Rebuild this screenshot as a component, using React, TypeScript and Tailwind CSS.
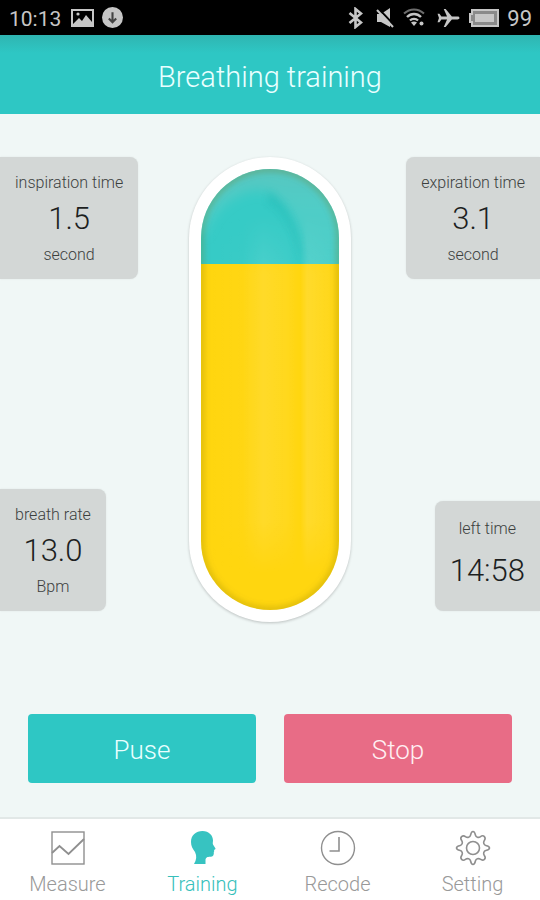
import type { ReactNode } from "react";

type Metric = { label: string; value: string; unit?: string };

function StatCard({ metric, side }: { metric: Metric; side: "left" | "right" }) {
  const edge = side === "left" ? "self-start rounded-r-lg" : "self-end rounded-l-lg";
  const size = metric.unit ? "h-[122px] pt-4" : "h-[110px] pt-[18px]";
  return (
    <dl
      className={`flex flex-col items-center whitespace-nowrap bg-[#d3d7d6] px-[15px] text-center font-light text-[#3c3f3e] shadow-[0_0_2px_rgba(0,0,0,0.08)] ${edge} ${size}`}
    >
      <dt className="text-base leading-5">{metric.label}</dt>
      <dd className={`text-[31px] leading-9 text-[#1d1f1f] ${metric.unit ? "mt-2" : "mt-[14px]"}`}>
        {metric.value}
      </dd>
      {metric.unit && <dd className="mt-2 text-base leading-5">{metric.unit}</dd>}
    </dl>
  );
}

function Capsule() {
  return (
    <div
      role="img"
      aria-label="Breath level"
      className="h-[465px] rounded-full bg-white p-3 shadow-[0_1px_3px_rgba(0,0,0,0.22)]"
    >
      <div className="relative flex h-full flex-col overflow-hidden rounded-full">
        <div className="h-[95px] bg-[#36cbc6]" />
        <div className="flex-1 bg-[#ffd60f]" />
        <svg className="absolute inset-0 h-full w-full" viewBox="0 0 138 441" aria-hidden="true">
          <defs>
            <linearGradient id="gloss" x1="0" x2="1" y1="0" y2="0">
              <stop offset="0" stopColor="#fff" stopOpacity="0" />
              <stop offset="0.3" stopColor="#fff" stopOpacity="0.02" />
              <stop offset="0.45" stopColor="#fff" stopOpacity="0.11" />
              <stop offset="0.62" stopColor="#fff" stopOpacity="0.06" />
              <stop offset="0.72" stopColor="#fff" stopOpacity="0" />
              <stop offset="0.77" stopColor="#fff" stopOpacity="0.12" />
              <stop offset="0.92" stopColor="#fff" stopOpacity="0.06" />
              <stop offset="1" stopColor="#fff" stopOpacity="0" />
            </linearGradient>
            <linearGradient id="fade" x1="0" x2="0" y1="0" y2="1">
              <stop offset="0.1" stopColor="#000" />
              <stop offset="0.24" stopColor="#fff" />
              <stop offset="0.8" stopColor="#fff" />
              <stop offset="0.92" stopColor="#000" />
            </linearGradient>
            <mask id="glossMask">
              <rect width="138" height="441" fill="url(#fade)" />
            </mask>
            <linearGradient id="dome" x1="0" x2="0" y1="0" y2="1">
              <stop offset="0" stopColor="#80bcb4" stopOpacity="0.45" />
              <stop offset="0.4" stopColor="#80d0c8" stopOpacity="0.35" />
              <stop offset="1" stopColor="#80d8d0" stopOpacity="0.2" />
            </linearGradient>
            <filter id="soft" x="-30%" y="-30%" width="160%" height="160%">
              <feGaussianBlur stdDeviation="3" />
            </filter>
            <filter id="softer" x="-30%" y="-30%" width="160%" height="160%">
              <feGaussianBlur stdDeviation="6" />
            </filter>
            <clipPath id="water">
              <rect width="138" height="95" />
            </clipPath>
          </defs>
          <rect width="138" height="441" fill="url(#gloss)" mask="url(#glossMask)" />
          <g clipPath="url(#water)">
            <path
              d="M-10 60V-10H150V110H104C104 70 94 42 74 28C66 22 60 20 50 22C28 27 10 44 4 66Z"
              fill="url(#dome)"
              filter="url(#softer)"
            />
            <path d="M68 22C86 34 100 56 102 100C94 64 84 44 66 34Z" fill="#20bcb7" opacity="0.45" filter="url(#soft)" />
          </g>
          <rect
            x="0"
            y="0"
            width="138"
            height="441"
            rx="69"
            fill="none"
            stroke="#7a6c10"
            strokeOpacity="0.32"
            strokeWidth="5"
            filter="url(#soft)"
          />
        </svg>
      </div>
    </div>
  );
}

function StatusBar() {
  return (
    <div className="flex h-[35px] items-center bg-black pl-[9px] pr-[8px] text-[#c6c6c6]">
      <span className="pt-[2px] text-[21px] leading-7">10:13</span>
      <svg className="ml-[10px]" width="23" height="18" viewBox="0 0 23 18" aria-hidden="true">
        <rect x="1" y="1" width="21" height="16" fill="none" stroke="currentColor" strokeWidth="2" />
        <path d="M2 15L8 9L11 12L15 6L21 13V16H2Z" fill="currentColor" />
        <circle cx="7" cy="5" r="1.6" fill="currentColor" />
      </svg>
      <svg className="ml-[8px]" width="21" height="21" viewBox="0 0 20 20" aria-hidden="true">
        <circle cx="10" cy="10" r="10" fill="currentColor" />
        <path d="M10 5V14M6.500 11L10 14.500L13.500 11" fill="none" stroke="#444" strokeWidth="2" />
      </svg>
      <div className="ml-auto flex items-center">
        <svg width="15" height="22" viewBox="0 0 15 22" fill="none" stroke="currentColor" aria-hidden="true">
          <path d="M1.500 6L13 15.500L7.500 20V2L13 6.500L1.500 16" strokeWidth="2.600" />
        </svg>
        <svg className="ml-[13px]" width="18" height="20" viewBox="0 0 18 20" aria-hidden="true">
          <path d="M1 6H5L14 0V19L5 14H1Z" fill="currentColor" />
          <path d="M2 0L18 17" stroke="#000" strokeWidth="2" />
          <path d="M1 2L17 19" stroke="currentColor" strokeWidth="2" />
        </svg>
        <svg className="ml-[9px]" width="22" height="19" viewBox="0 0 22 19" fill="none" stroke="currentColor" aria-hidden="true">
          <path d="M1 5.500C7 0 15 0 21 5.500" strokeWidth="2" opacity="0.55" />
          <path d="M4 9C8 5 14 5 18 9" strokeWidth="2.400" />
          <path d="M7 12.500C9 10.300 13 10.300 15 12.500" strokeWidth="2.200" />
          <path d="M8 14.500Q11 12.500 14 14.500L11 18Z" fill="currentColor" stroke="none" />
          <circle cx="18.500" cy="15.500" r="2" fill="currentColor" stroke="none" />
        </svg>
        <svg className="ml-[12px]" width="23" height="20" viewBox="0 0 24 21" aria-hidden="true">
          <path
            d="M23.500 10.500C23.500 9.400 22.500 9 21.500 9H15.500L9 1H7L10.500 9H4.500L2.500 6H0.500L2 10.500L0.500 15H2.500L4.500 12H10.500L7 20H9L15.500 12H21.500C22.500 12 23.500 11.600 23.500 10.500Z"
            fill="currentColor"
          />
        </svg>
        <svg className="ml-[9px]" width="30" height="18" viewBox="0 0 30 18" fill="none" aria-hidden="true">
          <path d="M3 1H29V17H3V13H1V5H3Z" fill="#8a8a8a" stroke="currentColor" strokeWidth="2" />
          <rect x="6" y="5" width="19" height="8" fill="currentColor" />
        </svg>
        <span className="ml-[8px] pt-[2px] text-[22px] leading-7">99</span>
      </div>
    </div>
  );
}

function NavItem({ label, active, children }: { label: string; active?: boolean; children: ReactNode }) {
  return (
    <a
      href="#"
      aria-current={active ? "page" : undefined}
      className={`flex flex-1 flex-col items-center pt-[11px] text-xl font-light ${
        active ? "text-[#37bfbb]" : "text-[#999999]"
      }`}
    >
      <svg width="36" height="36" viewBox="0 0 36 36" fill="none" stroke="#8f8f8f" strokeWidth="1.400" aria-hidden="true">
        {children}
      </svg>
      <span className="mt-[6px] leading-6">{label}</span>
    </a>
  );
}

export default function App() {
  return (
    <div className="flex min-h-screen flex-col bg-[#f0f7f6] font-['Roboto','Liberation_Sans',sans-serif]">
      <StatusBar />
      <header className="flex h-[79px] items-center justify-center bg-[#2ec7c4] bg-[linear-gradient(to_bottom,#2fb5b1_0px,#2ec7c4_18px)] pt-[4px]">
        <h1 className="text-[29px] font-light leading-9 text-[#e9ffff]">Breathing training</h1>
      </header>

      <main className="flex flex-1 flex-col pt-[43px]">
        <div className="grid grid-cols-[1fr_162px_1fr]">
          <div className="flex flex-col justify-between pb-[11px]">
            <StatCard side="left" metric={{ label: "inspiration time", value: "1.5", unit: "second" }} />
            <StatCard side="left" metric={{ label: "breath rate", value: "13.0", unit: "Bpm" }} />
          </div>
          <Capsule />
          <div className="flex flex-col justify-between pb-[11px]">
            <StatCard side="right" metric={{ label: "expiration time", value: "3.1", unit: "second" }} />
            <StatCard side="right" metric={{ label: "left time", value: "14:58" }} />
          </div>
        </div>

        <div className="mt-auto flex gap-7 px-7 pb-[34px] pt-7">
          <button type="button" className="h-[69px] flex-1 rounded bg-[#2ec7c4] pt-1 text-[26px] font-light text-[#e9ffff]">
            Puse
          </button>
          <button type="button" className="h-[69px] flex-1 rounded bg-[#e86c86] pt-1 text-[26px] font-light text-[#fff0f3]">
            Stop
          </button>
        </div>
      </main>

      <nav className="flex h-[83px] border-t-2 border-[#e2e8e7] bg-white">
        <NavItem label="Measure">
          <rect x="2" y="2" width="32" height="32" />
          <path d="M2 23L9.500 16L18.500 24L34 9" strokeWidth="1.800" />
        </NavItem>
        <NavItem label="Training" active>
          <path
            d="M9 34C11.500 30 12 26 10 22C7.500 18.500 6 16 6 12C6 5 11 1 17.500 1C24 1 28 5.500 28 10.500C28 12 27.500 13 28 14.500L30.500 18.500C30.700 19.300 29.500 19.600 29 20C29.400 21 29.300 21.500 28.800 22C29 24.500 28.500 26.500 26 26.700C23.500 26.700 21 26.700 20.500 29.500L20.500 34Z"
            fill="#37c3c1"
            stroke="none"
          />
        </NavItem>
        <NavItem label="Recode">
          <circle cx="18" cy="18" r="16.500" />
          <path d="M19 7V21H9.500" strokeWidth="1.600" />
        </NavItem>
        <NavItem label="Setting">
          <circle cx="18" cy="18" r="6.500" strokeWidth="1.600" />
          <path
            d="M15.500 5.200C16 3 16.800 1.500 18 1.500S20 3 20.500 5.200C21 7.200 23.500 8 25.200 6.800C27 5.500 28.400 5.500 29.400 6.600S30.500 9 29.200 10.800C28 12.500 28.800 15 30.800 15.500C33 16 34.500 16.800 34.500 18S33 20 30.800 20.500C28.800 21 28 23.500 29.200 25.200C30.500 27 30.500 28.400 29.400 29.400S27 30.500 25.200 29.200C23.500 28 21 28.800 20.500 30.800C20 33 19.200 34.500 18 34.500S16 33 15.500 30.800C15 28.800 12.500 28 10.800 29.200C9 30.500 7.600 30.500 6.600 29.400S5.500 27 6.800 25.200C8 23.500 7.200 21 5.200 20.500C3 20 1.500 19.200 1.500 18S3 16 5.200 15.500C7.200 15 8 12.500 6.800 10.800C5.500 9 5.500 7.600 6.600 6.600S9 5.500 10.800 6.800C12.500 8 15 7.200 15.500 5.200Z"
            strokeWidth="1.600"
          />
        </NavItem>
      </nav>
    </div>
  );
}
